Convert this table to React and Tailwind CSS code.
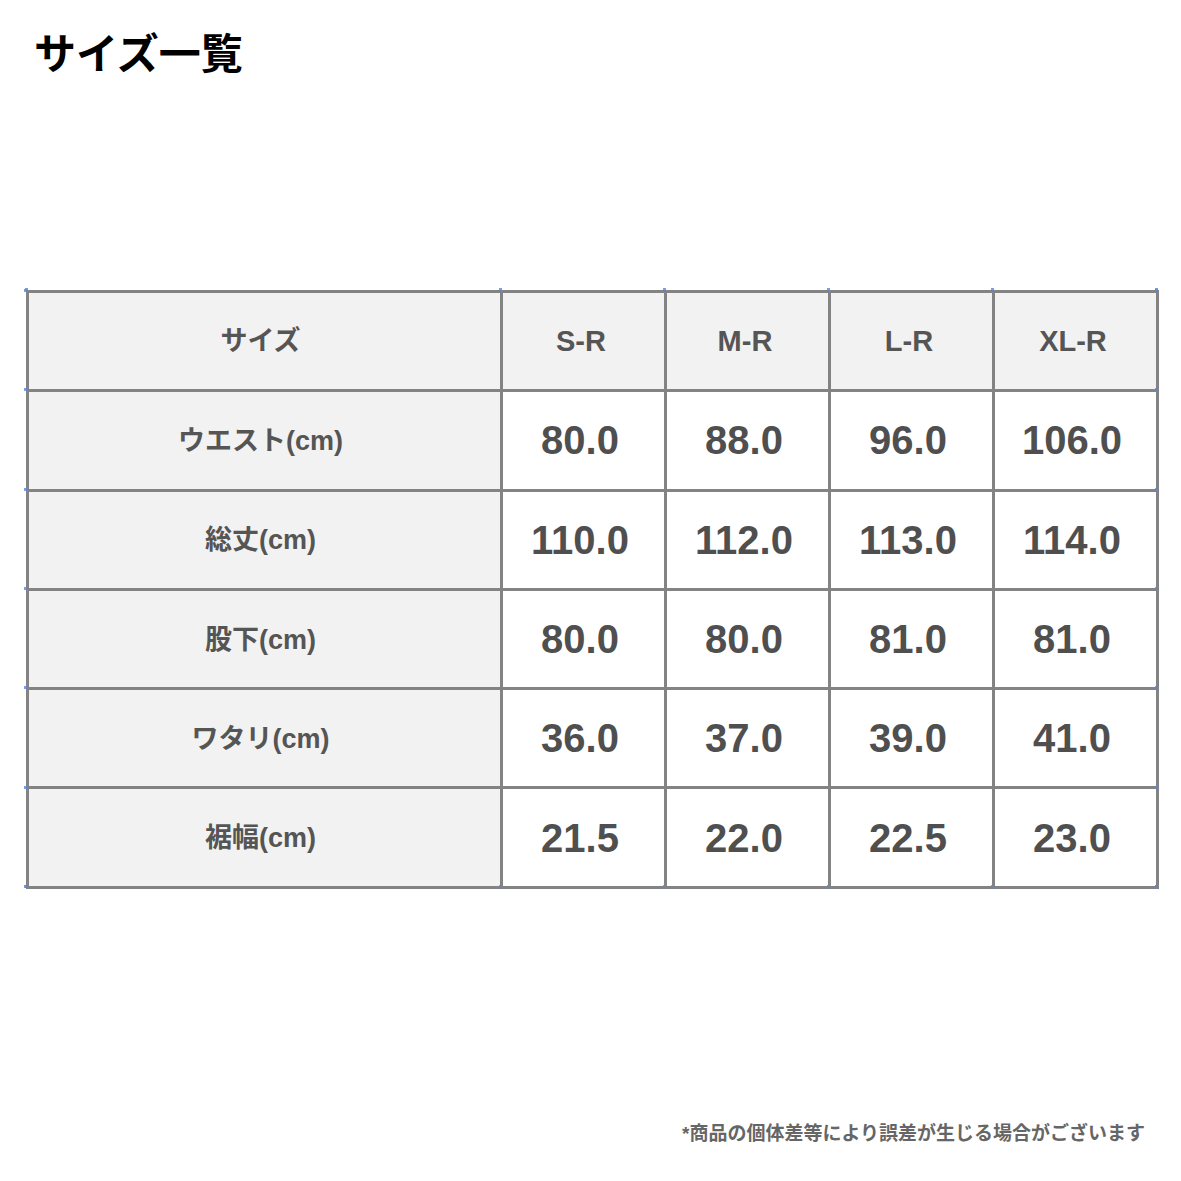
const sizes = ["S-R", "M-R", "L-R", "XL-R"];

const rows = [
  { label: "ウエスト(cm)", values: ["80.0", "88.0", "96.0", "106.0"] },
  { label: "総丈(cm)", values: ["110.0", "112.0", "113.0", "114.0"] },
  { label: "股下(cm)", values: ["80.0", "80.0", "81.0", "81.0"] },
  { label: "ワタリ(cm)", values: ["36.0", "37.0", "39.0", "41.0"] },
  { label: "裾幅(cm)", values: ["21.5", "22.0", "22.5", "23.0"] },
];

const font = {
  fontFamily: '"Liberation Sans", "Noto Sans CJK JP", sans-serif',
};

// grid intersections along the outer border (tiny blue marks in the original)
const colLines = [0, 474, 638, 802, 966, 1130];
const rowLines = [0, 99, 199, 298, 397, 497, 596];

export default function App() {
  return (
    <div className="w-[1181px] h-[1181px] bg-white relative" style={font}>
      <h1 className="pt-[34px] pl-[34px] text-[42px] leading-none font-bold text-black">
        サイズ一覧
      </h1>

      <div className="relative mt-[214px] ml-[26px] w-[1130px]">
        <table className="w-full table-fixed border-collapse">
          <colgroup>
            <col className="w-[474px]" />
            <col className="w-[164px]" />
            <col className="w-[164px]" />
            <col className="w-[164px]" />
            <col className="w-[164px]" />
          </colgroup>
          <thead>
            <tr className="h-[99.3px] bg-[#f2f2f2]">
              <th className="border-[3px] border-[#838383] text-[27px] font-bold text-[#555555] pr-[8px]">
                サイズ
              </th>
              {sizes.map((s) => (
                <th
                  key={s}
                  className="border-[3px] border-[#838383] text-[29px] font-bold text-[#555555] pt-[2px] pr-[5px]"
                >
                  {s}
                </th>
              ))}
            </tr>
          </thead>
          <tbody>
            {rows.map((r) => (
              <tr key={r.label} className="h-[99.3px]">
                <td className="border-[3px] border-[#838383] bg-[#f2f2f2] text-center text-[27px] font-bold text-[#555555] pt-[2px] pr-[8px]">
                  {r.label}
                </td>
                {r.values.map((v, i) => (
                  <td
                    key={i}
                    className="border-[3px] border-[#838383] bg-white text-center text-[40px] font-bold text-[#4f4f4f] pr-[7px]"
                  >
                    {v}
                  </td>
                ))}
              </tr>
            ))}
          </tbody>
        </table>

        {colLines.map((x) => (
          <span key={"t" + x}>
            <span
              className="absolute w-[3px] h-[3px] bg-[#5b84d8] opacity-80"
              style={{ left: x - 1, top: -2 }}
            />
            <span
              className="absolute w-[3px] h-[3px] bg-[#5b84d8] opacity-80"
              style={{ left: x - 1, top: 595 }}
            />
          </span>
        ))}
        {rowLines.map((y) => (
          <span key={"r" + y}>
            <span
              className="absolute w-[3px] h-[3px] bg-[#5b84d8] opacity-80"
              style={{ left: -2, top: y - 1 }}
            />
            <span
              className="absolute w-[3px] h-[3px] bg-[#5b84d8] opacity-80"
              style={{ left: 1129, top: y - 1 }}
            />
          </span>
        ))}
      </div>

      <p className="absolute right-[36px] top-[1124px] text-[19px] leading-none font-bold text-[#666666]">
        *商品の個体差等により誤差が生じる場合がございます
      </p>
    </div>
  );
}
